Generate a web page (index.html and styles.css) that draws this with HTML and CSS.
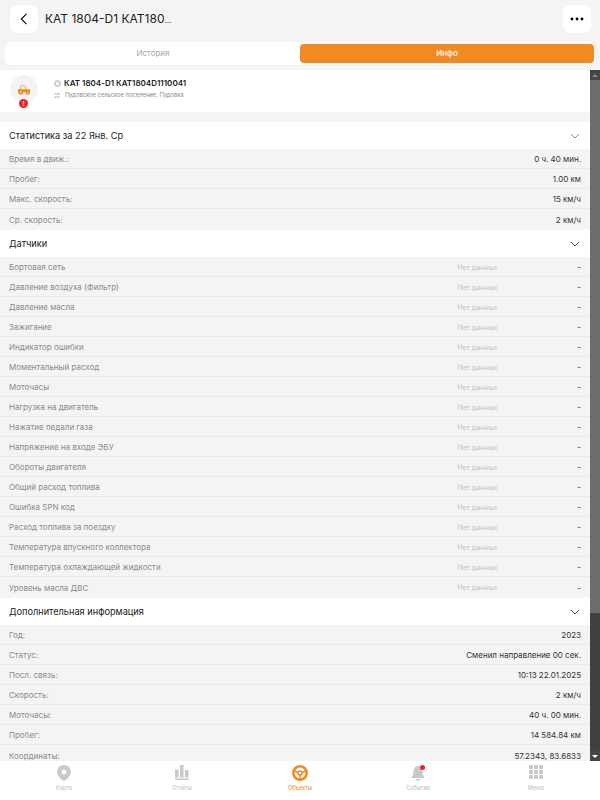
FILE: index.html
```html
<!DOCTYPE html>
<html lang="ru">
<head>
<meta charset="utf-8">
<title>KAT 1804-D1</title>
<link rel="stylesheet" href="styles.css">
</head>
<body>
<div class="app">
  <header class="topbar">
    <button class="icon-btn"><svg width="8" height="12" viewBox="0 0 8 12"><path d="M6.500.8 1.300 6l5.200 5.200" fill="none" stroke="#111" stroke-width="1.200"/></svg></button>
    <h1 class="title">КАТ 1804-D1 КАТ180<small class="more">...</small></h1>
    <button class="icon-btn"><svg width="14" height="4" viewBox="0 0 14 4"><circle cx="2" cy="2" r="1.400"/><circle cx="7" cy="2" r="1.400"/><circle cx="12" cy="2" r="1.400"/></svg></button>
  </header>
  <nav class="tabs">
    <div class="tab">История</div>
    <div class="tab active">Инфо</div>
  </nav>
  <div class="viewport">
    <main class="scroller">
      <section class="unit">
        <div class="avatar">
          <svg width="12" height="10" viewBox="0 0 12 10"><path d="M2.500 4.500V.8h4.500l1 3.700" fill="none" stroke="#f5a864" stroke-width="1"/><path d="M0 4.200h12v3H0z" fill="#f28a24"/><circle cx="2.800" cy="7" r="2.600" fill="#f28a24"/><circle cx="2.800" cy="7" r=".8" fill="#ffe3c8"/><circle cx="9.800" cy="7.500" r="2.200" fill="#f28a24"/><circle cx="9.800" cy="7.500" r=".7" fill="#ffe3c8"/></svg>
          <span class="alert">!</span>
        </div>
        <div class="unit-text">
          <div class="unit-name"><i class="status"></i>КАТ 1804-D1 КАТ1804D1110041</div>
          <div class="unit-place"><svg width="6" height="7" viewBox="0 0 6 7"><path d="M0 2h5.500M4.300.8 5.500 2M6 5H.5M1.700 6.200.5 5" fill="none" stroke="#999" stroke-width=".7"/></svg>Пудовское сельское поселение, Пудовка</div>
        </div>
      </section>

      <section class="group">
        <div class="group-head"><span>Статистика за 22 Янв. Ср</span><svg width="10" height="6" viewBox="0 0 10 6"><path d="m1 1 4 4 4-4" fill="none" stroke="#888" stroke-width=".9"/></svg></div>
        <div class="row"><span class="k">Время в движ.:</span><span class="v">0 ч. 40 мин.</span></div>
        <div class="row"><span class="k">Пробег:</span><span class="v">1.00 км</span></div>
        <div class="row"><span class="k">Макс. скорость:</span><span class="v">15 км/ч</span></div>
        <div class="row"><span class="k">Ср. скорость:</span><span class="v">2 км/ч</span></div>
      </section>

      <section class="group">
        <div class="group-head"><span>Датчики</span><svg width="10" height="6" viewBox="0 0 10 6"><path d="m1 1 4 4 4-4" fill="none" stroke="#333" stroke-width=".9"/></svg></div>
        <div class="row"><span class="k">Бортовая сеть</span><span class="n">Нет данных</span><span class="v">-</span></div>
        <div class="row"><span class="k">Давление воздуха (Фильтр)</span><span class="n">Нет данных</span><span class="v">-</span></div>
        <div class="row"><span class="k">Давление масла</span><span class="n">Нет данных</span><span class="v">-</span></div>
        <div class="row"><span class="k">Зажигание</span><span class="n">Нет данных</span><span class="v">-</span></div>
        <div class="row"><span class="k">Индикатор ошибки</span><span class="n">Нет данных</span><span class="v">-</span></div>
        <div class="row"><span class="k">Моментальный расход</span><span class="n">Нет данных</span><span class="v">-</span></div>
        <div class="row"><span class="k">Моточасы</span><span class="n">Нет данных</span><span class="v">-</span></div>
        <div class="row"><span class="k">Нагрузка на двигатель</span><span class="n">Нет данных</span><span class="v">-</span></div>
        <div class="row"><span class="k">Нажатие педали газа</span><span class="n">Нет данных</span><span class="v">-</span></div>
        <div class="row"><span class="k">Напряжение на входе ЭБУ</span><span class="n">Нет данных</span><span class="v">-</span></div>
        <div class="row"><span class="k">Обороты двигателя</span><span class="n">Нет данных</span><span class="v">-</span></div>
        <div class="row"><span class="k">Общий расход топлива</span><span class="n">Нет данных</span><span class="v">-</span></div>
        <div class="row"><span class="k">Ошибка SPN код</span><span class="n">Нет данных</span><span class="v">-</span></div>
        <div class="row"><span class="k">Расход топлива за поездку</span><span class="n">Нет данных</span><span class="v">-</span></div>
        <div class="row"><span class="k">Температура впускного коллектора</span><span class="n">Нет данных</span><span class="v">-</span></div>
        <div class="row"><span class="k">Температура охлаждающей жидкости</span><span class="n">Нет данных</span><span class="v">-</span></div>
        <div class="row"><span class="k">Уровень масла ДВС</span><span class="n">Нет данных</span><span class="v">-</span></div>
      </section>

      <section class="group">
        <div class="group-head"><span>Дополнительная информация</span><svg width="10" height="6" viewBox="0 0 10 6"><path d="m1 1 4 4 4-4" fill="none" stroke="#333" stroke-width=".9"/></svg></div>
        <div class="row"><span class="k">Год:</span><span class="v">2023</span></div>
        <div class="row"><span class="k">Статус:</span><span class="v">Сменил направление 00 сек.</span></div>
        <div class="row"><span class="k">Посл. связь:</span><span class="v">10:13 22.01.2025</span></div>
        <div class="row"><span class="k">Скорость:</span><span class="v">2 км/ч</span></div>
        <div class="row"><span class="k">Моточасы:</span><span class="v">40 ч. 00 мин.</span></div>
        <div class="row"><span class="k">Пробег:</span><span class="v">14 584.84 км</span></div>
        <div class="row"><span class="k">Координаты:</span><span class="v">57.2343, 83.6833</span></div>
      </section>
    </main>
    <div class="scrollbar" aria-hidden="true">
      <div class="sb-btn"><i class="tri-up"></i></div>
      <div class="sb-thumb"></div>
      <div class="sb-track"></div>
      <div class="sb-btn"><i class="tri-down"></i></div>
    </div>
  </div>
  <footer class="bottom">
    <div class="nav-item"><span class="nav-icon"><svg width="14" height="16" viewBox="0 0 14 16"><path fill="#c9c9c9" fill-rule="evenodd" d="M7 0a7 7 0 0 1 7 7c0 3.600-4 7.400-7 9-3-1.600-7-5.400-7-9a7 7 0 0 1 7-7Zm0 4.500a2.500 2.500 0 1 0 0 5 2.500 2.500 0 0 0 0-5Z"/></svg></span><span>Карта</span></div>
    <div class="nav-item"><span class="nav-icon"><svg width="14" height="15" viewBox="0 0 14 15" fill="#c9c9c9"><rect y="4.500" width="3.500" height="8"/><rect x="5" y="0" width="3.500" height="12.500"/><rect x="10" y="5" width="3.500" height="7.500"/><rect y="13.500" width="14" height="1.500"/></svg></span><span>Отчёты</span></div>
    <div class="nav-item on"><span class="nav-icon"><svg width="16" height="16" viewBox="0 0 16 16"><circle cx="8" cy="8" r="6.700" fill="none" stroke="#f28a24" stroke-width="2.600"/><circle cx="8" cy="8" r="2" fill="none" stroke="#f28a24" stroke-width="1.400"/><path d="M2 6 6.500 7.500M14 6 9.500 7.500M8 10v4" stroke="#f28a24" stroke-width="1.500"/></svg></span><span>Объекты</span></div>
    <div class="nav-item"><span class="nav-icon bell"><svg width="14" height="16" viewBox="0 0 14 16" fill="#c9c9c9"><path d="M7 1c3 0 4.500 2.500 4.500 5.500 0 3 1 4.500 2 5.500v1H.5v-1c1-1 2-2.500 2-5.500C2.500 3.500 4 1 7 1Z"/><rect x="4.500" y="14" width="5" height="1.500" rx=".7"/></svg><i class="dot"></i></span><span>События</span></div>
    <div class="nav-item"><span class="nav-icon"><svg width="14" height="14" viewBox="0 0 14 14" fill="#c9c9c9"><rect width="4" height="4" rx=".8"/><rect x="5" width="4" height="4" rx=".8"/><rect x="10" width="4" height="4" rx=".8"/><rect y="5" width="4" height="4" rx=".8"/><rect x="5" y="5" width="4" height="4" rx=".8"/><rect x="10" y="5" width="4" height="4" rx=".8"/><rect y="10" width="4" height="4" rx=".8"/><rect x="5" y="10" width="4" height="4" rx=".8"/><rect x="10" y="10" width="4" height="4" rx=".8"/></svg></span><span>Меню</span></div>
  </footer>
</div>
</body>
</html>
```
FILE: styles.css
```css
* { box-sizing: border-box; }
html, body { height: 100%; }
body { margin: 0; background: #f4f4f4; font-family: Inter, "Noto Sans", sans-serif; color: #222; overflow: hidden; }
.app { height: 800px; display: flex; flex-direction: column; }
.topbar { height: 42px; flex: none; padding: 5px 9px 0 10px; display: flex; align-items: flex-start; gap: 7px; }
.icon-btn { width: 28px; height: 28px; padding: 0; border: 0; background: #fff; border-radius: 7px; display: flex; align-items: center; justify-content: center; flex: none; }
.title { margin: 0; flex: 1; font-size: 12px; line-height: 28px; font-weight: 400; color: #1c1c1c; }
.more { font-size: 8px; }
.tabs { height: 23px; flex: none; margin: 0 5px; padding: 2px 1px; background: #fff; border-radius: 6px; display: flex; }
.tab { flex: 1; border-radius: 4px; text-align: center; font-size: 8px; line-height: 19px; color: #a8a8a8; }
.tab.active { background: #f28a24; color: #fff; font-weight: 500; }
.viewport { position: relative; margin-top: 5px; flex: 1; min-height: 0; }
.scroller { height: 100%; overflow: hidden; }
.scrollbar { position: absolute; top: 0; right: 0; bottom: 0; width: 10px; display: flex; flex-direction: column; }
.sb-btn { height: 10px; flex: none; background: #454545; display: flex; align-items: center; justify-content: center; }
.sb-thumb { height: 533px; flex: none; background: #6c6c6c; }
.sb-track { flex: 1; background: #404040; }
.tri-up { border: 3px solid transparent; border-top: 0; border-bottom: 3px solid #8c8c8c; }
.tri-down { border: 3px solid transparent; border-bottom: 0; border-top: 3px solid #fff; }
.unit { height: 42px; background: #fff; display: flex; padding: 5px 9px 0 10px; gap: 16px; }
.avatar { position: relative; width: 28px; height: 28px; border-radius: 50%; background: #f4f4f4; display: flex; align-items: center; justify-content: center; flex: none; padding-top: 1px; }
.alert { position: absolute; left: 9px; top: 24px; width: 9px; height: 9px; border-radius: 50%; background: #e8232a; color: #fff; font-size: 6px; line-height: 9px; text-align: center; font-weight: 700; }
.unit-name { margin-top: 3px; font-size: 8px; line-height: 11px; font-weight: 600; color: #222; display: flex; align-items: center; gap: 3px; }
.status { width: 7px; height: 7px; border-radius: 50%; background: #fff; border: 2px solid #cfcfcf; }
.unit-place { margin-top: 2px; font-size: 5.800px; line-height: 8px; color: #8b8b8b; display: flex; align-items: center; gap: 5px; }
.group { margin-top: 10px; }
.group + .group { margin-top: 1px; }
.group-head { height: 27px; background: #fff; padding: 0 20px 0 9px; display: flex; align-items: center; justify-content: space-between; font-size: 9.200px; color: #222; }
.row { height: 20px; padding: 1px 19px 0 9px; display: flex; align-items: center; border-bottom: 1px solid #e9e9e9; font-size: 8px; }
.row:last-child { border-bottom: 0; }
.k { flex: 1; color: #8a8a8a; }
.n { width: 120px; color: #c2c2c2; font-size: 7px; }
.v { color: #333; text-align: right; }
.bottom { height: 39px; flex: none; background: #fff; display: grid; grid-template-columns: repeat(5, 118px); padding-left: 5px; }
.nav-item { display: flex; flex-direction: column; align-items: center; gap: 3px; padding-top: 4px; font-size: 5.500px; line-height: 7px; color: #bdbdbd; }
.nav-item.on { color: #f28a24; }
.nav-icon { height: 17px; display: flex; align-items: flex-start; justify-content: center; position: relative; }
.dot { position: absolute; right: 0; top: 0; width: 5px; height: 5px; border-radius: 50%; background: #e8232a; }
```
